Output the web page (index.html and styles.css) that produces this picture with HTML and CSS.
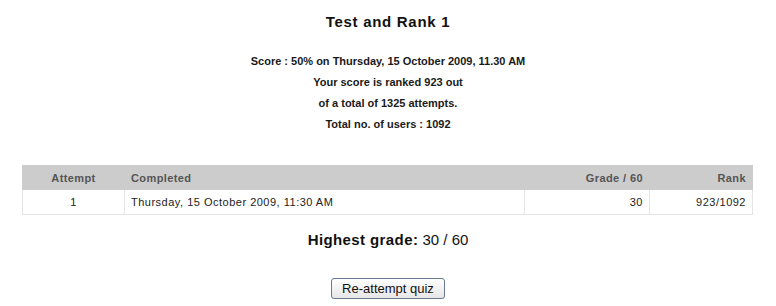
FILE: index.html
```html
<!DOCTYPE html>
<html>
<head>
<meta charset="utf-8">
<link rel="stylesheet" href="styles.css">
</head>
<body>
<div class="page">
  <h2 class="title">Test and Rank 1</h2>
  <div class="summary">
    <div class="line">Score : 50% on Thursday, 15 October 2009, 11.30 AM</div>
    <div class="line">Your score is ranked 923 out</div>
    <div class="line">of a total of 1325 attempts.</div>
    <div class="line">Total no. of users : 1092</div>
  </div>
  <table class="attempts">
    <thead>
      <tr>
        <th class="c-attempt">Attempt</th>
        <th class="c-completed">Completed</th>
        <th class="c-grade">Grade / 60</th>
        <th class="c-rank">Rank</th>
      </tr>
    </thead>
    <tbody>
      <tr>
        <td class="c-attempt">1</td>
        <td class="c-completed">Thursday, 15 October 2009, 11:30 AM</td>
        <td class="c-grade">30</td>
        <td class="c-rank">923/1092</td>
      </tr>
    </tbody>
  </table>
  <div class="highest"><span class="label">Highest grade:</span> <span class="value">30 / 60</span></div>
  <div class="actions"><button class="btn">Re-attempt quiz</button></div>
</div>
</body>
</html>
```
FILE: styles.css
```css
html, body { margin: 0; padding: 0; background: #fff; }
body { font-family: "Liberation Sans", Arial, sans-serif; color: #111; }
.page { padding: 12px 22px 0 22px; display: flex; flex-direction: column; align-items: stretch; }
.title { margin: 0; font-size: 15px; line-height: 20px; font-weight: bold; text-align: center; letter-spacing: 0.7px; color: #111; }
.summary { margin-top: 19px; text-align: center; font-size: 11px; line-height: 21px; color: #1a1a1a; font-weight: bold; }
.attempts { margin-top: 30px; width: 731px; border-collapse: collapse; font-size: 11px; letter-spacing: 0.5px; }
.attempts th { background: #cccccc; color: #555; font-weight: bold; height: 23px; padding: 0 6px; border: 1px solid #cccccc; letter-spacing: 0.4px; }
.attempts td { height: 24px; padding: 0 6px; border: 1px solid #e4e4e4; color: #222; background: #fff; }
.c-attempt { width: 89px; text-align: center; }
.c-completed { text-align: left; }
.c-grade { width: 112px; text-align: right; }
.c-rank { width: 90px; text-align: right; }
.highest { margin-top: 15px; text-align: center; font-size: 15px; line-height: 20px; color: #111; }
.highest .label { font-weight: bold; letter-spacing: 0.4px; }
.highest .value { font-size: 15px; }
.actions { margin-top: 28px; text-align: center; }
.btn { font-family: "Liberation Sans", Arial, sans-serif; font-size: 13px; height: 21px; padding: 0 10px; border: 1px solid #6a7a90; border-radius: 3px; background: linear-gradient(#ffffff, #e6e6e6); color: #111; line-height: 18px; }
```
